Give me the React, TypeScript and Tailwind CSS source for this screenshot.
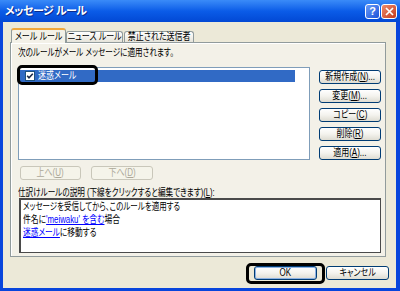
import type { ReactNode } from "react";

const jp = "font-['Liberation_Sans','Noto_Sans_CJK_JP',sans-serif] [font-feature-settings:'palt']";

// MS UI Gothic is much narrower than Noto CJK, so squeeze the text horizontally
function Sq({ children, className = "scale-x-[0.76] origin-left" }: { children: ReactNode; className?: string }) {
  return <span className={`inline-block whitespace-nowrap ${className}`}>{children}</span>;
}

function Btn({
  children,
  className = "",
  disabled = false,
  primary = false,
}: {
  children: ReactNode;
  className?: string;
  disabled?: boolean;
  primary?: boolean;
}) {
  const tone = disabled
    ? "border-[#C9C7BA] bg-[#F5F4EA] text-[#ACA899]"
    : "border-[#003C74] bg-gradient-to-b from-white via-[#F4F3EE] to-[#DEDCD2] text-black";
  return (
    <div
      className={`flex h-[14px] shrink-0 items-center justify-center rounded-[3px] border text-[10px] leading-none ${tone} ${
        primary ? "shadow-[inset_0_0_0_1px_#8DB2E3]" : ""
      } ${className}`}
    >
      <Sq className="origin-center scale-x-[0.8]">{children}</Sq>
    </div>
  );
}

function Check() {
  return (
    <svg width="10" height="10" viewBox="0 0 10 10" className="shrink-0">
      <rect x="0.5" y="0.5" width="9" height="9" fill="#fff" stroke="#1C5180" />
      <path d="M2.2 4.8 L4 6.8 L7.8 2.8" fill="none" stroke="#1b2a4a" strokeWidth="1.6" />
    </svg>
  );
}

export default function App() {
  return (
    <div className={`flex h-[291px] w-[400px] flex-col overflow-hidden bg-[#0845DC] ${jp}`}>
      {/* title bar */}
      <div className="flex h-[22px] shrink-0 items-center bg-gradient-to-b from-[#3A8BF8] via-[#0B5CE8] to-[#0348D4] pl-[5px] pr-[3px]">
        <span className="text-[11px] font-bold tracking-[-0.5px] text-white [text-shadow:1px_1px_0_#0B2A8A]">
          メッセージ ルール
        </span>
        <div className="ml-auto flex gap-[1px]">
          <div className="flex h-[15px] w-[15px] items-center justify-center rounded-[3px] border border-white bg-gradient-to-br from-[#6B9BF7] to-[#1C50D8] text-[11px] font-bold leading-none text-white">
            ?
          </div>
          <div className="flex h-[15px] w-[16px] items-center justify-center rounded-[3px] border border-white bg-gradient-to-br from-[#EC8A6C] to-[#C63817]">
            <svg width="9" height="9" viewBox="0 0 9 9">
              <path d="M1 1 L8 8 M8 1 L1 8" stroke="#fff" strokeWidth="1.7" />
            </svg>
          </div>
        </div>
      </div>

      {/* client area */}
      <div className="flex flex-1 flex-col pb-[3px] pl-[3px] pr-[4px]">
        <div className="flex flex-1 flex-col bg-[#ECE9D8]">
          {/* tabs */}
          <div className="ml-[8px] mt-[6px] flex h-[14px] items-end text-[10px] leading-none">
            <div className="relative z-10 -mb-px flex h-[15px] w-[55px] items-center justify-center rounded-t-[3px] border-x border-t-2 border-x-[#919B9C] border-t-[#F0A83C] bg-[#F3F1E8] text-black">
              <Sq className="origin-center scale-x-[0.8]">メール ルール</Sq>
            </div>
            <div className="flex h-[11px] w-[57px] items-center justify-center rounded-t-[3px] border-x border-t border-[#919B9C] bg-gradient-to-b from-white to-[#E6E4DA] text-black">
              <Sq className="origin-center scale-x-[0.8]">ニュース ルール</Sq>
            </div>
            <div className="ml-px flex h-[11px] w-[70px] items-center justify-center rounded-t-[3px] border-x border-t border-[#919B9C] bg-gradient-to-b from-white to-[#E6E4DA] text-black">
              <Sq className="origin-center scale-x-[0.8]">禁止された送信者</Sq>
            </div>
          </div>

          {/* tab panel */}
          <div className="relative ml-[7px] flex h-[215px] w-[376px] flex-col border border-[#919B9C] bg-[#F3F1E8] text-[10px] text-black shadow-[inset_1px_1px_0_#fff]">
            <div className="ml-[7px] mt-[4px] h-[12px] leading-[12px]">
              <Sq>次のルールがメール メッセージに適用されます。</Sq>
            </div>

            <div className="ml-[7px] mt-[8px] flex">
              <div className="relative h-[93px] w-[292px] border border-[#7F9DB9] bg-white pl-px pt-[2px]">
                <div className="flex h-[12px] w-[275px] items-center gap-[3px] bg-[#316AC5] pl-[5px] leading-none text-white">
                  <Check />
                  <Sq className="origin-left scale-x-[0.8]">迷惑メール</Sq>
                </div>
                <div className="absolute -left-[2px] -top-[3px] h-[20px] w-[81px] rounded-[5px] border-[3px] border-black" />
              </div>
              <div className="ml-[9px] flex w-[62px] flex-col gap-[5px] pt-[3px]">
                <Btn>
                  新規作成(<u>N</u>)...
                </Btn>
                <Btn>
                  変更(<u>M</u>)...
                </Btn>
                <Btn>
                  コピー(<u>C</u>)
                </Btn>
                <Btn>
                  削除(<u>R</u>)
                </Btn>
                <Btn>
                  適用(<u>A</u>)...
                </Btn>
              </div>
            </div>

            <div className="ml-[9px] mt-[6px] flex gap-[10px]">
              <Btn disabled className="w-[61px]">
                上へ(<u>U</u>)
              </Btn>
              <Btn disabled className="w-[62px]">
                下へ(<u>D</u>)
              </Btn>
            </div>

            <div className="ml-[7px] mt-[7px] h-[11px] leading-[11px]">
              <Sq>
                仕訳けルールの説明 (下線をクリックすると編集できます)(<u>L</u>):
              </Sq>
            </div>

            <div className="ml-[8px] h-[55px] w-[362px] border-b border-l-2 border-r border-t-2 border-[#4A4A4A] bg-white px-[2px] leading-[13px]">
              <div>
                <Sq className="origin-left scale-x-[0.75]">メッセージを受信してから、このルールを適用する</Sq>
              </div>
              <div>
                <Sq className="origin-left scale-x-[0.78]">
                  件名に<span className="text-[#0000FF] underline">'meiwaku' を含む</span>場合
                </Sq>
              </div>
              <div>
                <Sq className="origin-left scale-x-[0.77]">
                  <span className="text-[#0000FF] underline">迷惑メール</span>に移動する
                </Sq>
              </div>
            </div>
          </div>

          {/* dialog buttons */}
          <div className="mr-[7px] mt-[9px] flex justify-end gap-[9px]">
            <div className="relative">
              <Btn primary className="w-[63px]">
                OK
              </Btn>
              <div className="absolute -bottom-[4px] -left-[8px] -right-[8px] -top-[3px] rounded-[5px] border-[3px] border-black" />
            </div>
            <Btn className="w-[63px]">キャンセル</Btn>
          </div>
        </div>
      </div>
    </div>
  );
}
